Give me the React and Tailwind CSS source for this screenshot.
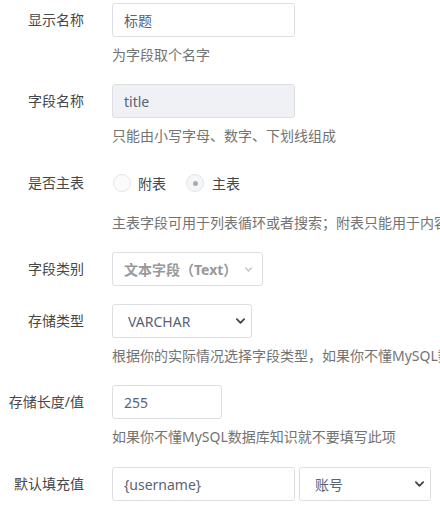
import React from "react";

const Chevron = ({ className }) => (
  <svg viewBox="0 0 10 6" className={className} fill="none">
    <path d="M1 1l4 4 4-4" stroke="currentColor" strokeWidth="2" strokeLinecap="round" strokeLinejoin="round" />
  </svg>
);

const Label = ({ children }) => (
  <div className="w-[84px] shrink-0 text-right text-[14px] leading-[34px] text-[#474747] whitespace-nowrap">
    {children}
  </div>
);

const Help = ({ children, className = "" }) => (
  <div className={`ml-[112px] text-[14px] leading-[20px] text-[#737373] whitespace-nowrap overflow-hidden ${className}`}>
    {children}
  </div>
);

const inputBase =
  "h-[34px] border border-[#dcdee2] rounded-[3px] px-[11px] text-[14px] text-[#5a6275] flex items-center";

const App = () => {
  return (
    <div
      className="w-[440px] h-[507px] overflow-hidden bg-white pt-[3px]"
      style={{ fontFamily: '"Noto Sans", "Noto Sans CJK SC", sans-serif' }}
    >
      {/* 显示名称 */}
      <div className="mb-[19px]">
        <div className="flex">
          <Label>显示名称</Label>
          <div className={`${inputBase} ml-[28px] w-[183px]`}>标题</div>
        </div>
        <Help className="mt-[8px]">为字段取个名字</Help>
      </div>

      {/* 字段名称 */}
      <div className="mb-[19px]">
        <div className="flex">
          <Label>字段名称</Label>
          <div className={`${inputBase} ml-[28px] w-[183px] bg-[#eff1f5]`}>title</div>
        </div>
        <Help className="mt-[8px]">只能由小写字母、数字、下划线组成</Help>
      </div>

      {/* 是否主表 */}
      <div className="mb-[19px]">
        <div className="flex h-[36px] items-center">
          <Label>是否主表</Label>
          <div className="ml-[28px] flex items-center text-[14px] text-[#474747]">
            <span className="w-[18px] h-[18px] rounded-full border border-[#e3e5e8] bg-[#fbfbfc] ml-[1px]" />
            <span className="ml-[7px]">附表</span>
            <span className="ml-[20px] w-[18px] h-[18px] rounded-full border border-[#e3e5e8] bg-[#f5f6f8] flex items-center justify-center">
              <span className="w-[5px] h-[5px] rounded-full bg-[#a8abb2]" />
            </span>
            <span className="ml-[8px]">主表</span>
          </div>
        </div>
        <Help className="mt-[12px]">主表字段可用于列表循环或者搜索；附表只能用于内容页面</Help>
      </div>

      {/* 字段类别 */}
      <div className="mb-[18px] flex">
        <Label>字段类别</Label>
        <div className={`${inputBase} ml-[28px] w-[151px] font-bold text-[#999] justify-between pr-[10px]`}>
          <span>文本字段（Text）</span>
          <Chevron className="w-[7px] h-[5px] text-[#c0c4cc]" />
        </div>
      </div>

      {/* 存储类型 */}
      <div className="mb-[19px]">
        <div className="flex">
          <Label>存储类型</Label>
          <div className={`${inputBase} ml-[28px] w-[140px] pl-[15px] pr-[6px] justify-between`}>
            <span>VARCHAR</span>
            <Chevron className="w-[9px] h-[6px] text-[#444]" />
          </div>
        </div>
        <Help className="mt-[8px]">根据你的实际情况选择字段类型，如果你不懂MySQL数据库知识</Help>
      </div>

      {/* 存储长度/值 */}
      <div className="mb-[20px]">
        <div className="flex">
          <Label>存储长度/值</Label>
          <div className={`${inputBase} ml-[28px] w-[110px]`}>255</div>
        </div>
        <Help className="mt-[8px]">如果你不懂MySQL数据库知识就不要填写此项</Help>
      </div>

      {/* 默认填充值 */}
      <div className="flex">
        <Label>默认填充值</Label>
        <div className={`${inputBase} ml-[28px] w-[183px]`}>{"{username}"}</div>
        <div className={`${inputBase} ml-[4px] w-[132px] border-[#8593a8] pl-[15px] pr-[6px] justify-between`}>
          <span>账号</span>
          <Chevron className="w-[9px] h-[6px] text-[#444]" />
        </div>
      </div>
    </div>
  );
};

export default App;
